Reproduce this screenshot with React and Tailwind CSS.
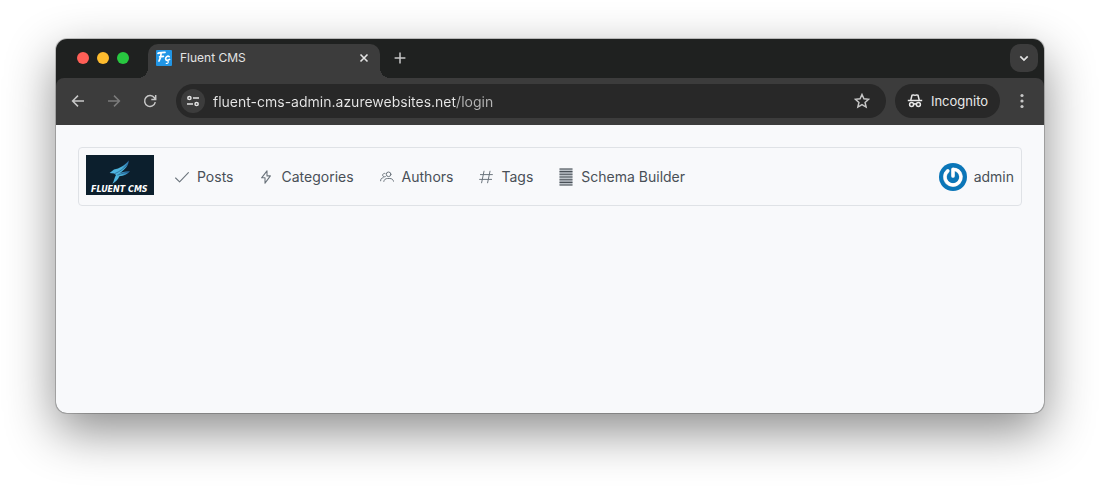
import React from "react";

const menuItems = [
  { label: "Posts", icon: CheckIcon },
  { label: "Categories", icon: BoltIcon },
  { label: "Authors", icon: UsersIcon },
  { label: "Tags", icon: HashIcon },
  { label: "Schema Builder", icon: SchemaIcon },
];

function Icon({ children, className = "size-3.5" }) {
  return (
    <svg
      viewBox="0 0 14 14"
      className={`${className} shrink-0`}
      fill="none"
      stroke="currentColor"
      strokeWidth="1"
      strokeLinecap="round"
      strokeLinejoin="round"
      aria-hidden="true"
    >
      {children}
    </svg>
  );
}

function CheckIcon() {
  return (
    <Icon>
      <path d="M.6 8 4.6 11.8 13.4 2.6" strokeWidth="1.1" />
    </Icon>
  );
}

function BoltIcon() {
  return (
    <Icon>
      <path d="M8 .8 2.6 7.8H6V13.2L11.4 5.9H8Z" strokeWidth="1.1" />
    </Icon>
  );
}

function UsersIcon() {
  return (
    <Icon>
      <circle cx="8.6" cy="4.3" r="2.3" />
      <path d="M3.8 11.4c.3-2 1.9-2.9 3.8-2.9h2.2c2 0 3.4 1 3.7 2.7" />
      <path d="M5 3.4a1.8 1.8 0 1 0 .3 3.3M.6 10.8c0-1.9 1-3 2.6-3.1" />
    </Icon>
  );
}

function HashIcon() {
  return (
    <Icon>
      <path d="M5 1.2 2.6 12.8M11 1.2 8.6 12.8M1.4 4.6h12M.6 9.4h12" />
    </Icon>
  );
}

function SchemaIcon() {
  return (
    <svg viewBox="0 0 14 18" className="h-[18px] w-3.5 shrink-0" aria-hidden="true">
      <path d="M.5.5h13v17H.5z" fill="#bcc2c8" />
      <path
        d="M.5 1h13M.5 3.6h13M.5 6.3h13M.5 9h13M.5 11.7h13M.5 14.4h13M.5 17h13"
        stroke="#495057"
        strokeWidth="1.1"
      />
    </svg>
  );
}

function BrandLogo() {
  return (
    <svg viewBox="0 0 68 40" className="mb-[3px] h-10 w-[68px] shrink-0" role="img" aria-label="Fluent CMS">
      <defs>
        <linearGradient id="wing" x1="0" y1="1" x2="1" y2="0">
          <stop offset="0" stopColor="#4fb4e4" />
          <stop offset=".55" stopColor="#4cb4da" />
          <stop offset="1" stopColor="#2768a4" />
        </linearGradient>
      </defs>
      <rect width="68" height="40" fill="#0c1f2d" />
      <path d="M42.8 5.4C40 9 36 11.6 32 13.6L28 14.6 23.6 18 28 18.6 30.4 20.2C36.4 16.6 42.4 12.2 42.8 5.4Z" fill="url(#wing)" />
      <path d="M30 20C33.4 17.4 38 16.4 44 16.2 41.4 19.2 38 20.8 33.4 21.2 32.2 24.6 29.6 26.4 26.4 28.8 28.2 25.8 28.4 22.6 30 20Z" fill="url(#wing)" />
      <path d="M28.4 18.8C34 16.6 38.4 12.8 41.6 9.2M31.4 20.2C35 18.6 39 17.8 43 16.8" stroke="#194c78" strokeWidth=".6" fill="none" />
      <text x="5" y="37" fill="#fff" className="font-['DejaVu_Sans',sans-serif] text-[8px] font-bold italic">
        FLUENT CMS
      </text>
    </svg>
  );
}

function Favicon() {
  return (
    <svg viewBox="0 0 16 16" className="size-4 shrink-0" aria-hidden="true">
      <rect width="16" height="16" rx="1" fill="#2196e6" />
      <g fill="none" stroke="#fff" strokeLinecap="round" strokeLinejoin="round">
        <path d="M2 3.4C2.8 2.4 5 2.8 9 2.4M5.2 3C5 6 4.6 8.6 3 11M3.6 6.8 7.4 6.4" strokeWidth="1.7" />
        <path d="M13.2 6.6C11.6 5.4 9.6 7 9.6 8.8 9.7 10.8 11.8 10.8 13.6 9.4" strokeWidth="1.6" />
        <path d="M11.8 11C13 12.2 12 13.8 10.2 13.4" strokeWidth="1.1" />
      </g>
    </svg>
  );
}

function Avatar() {
  return (
    <svg viewBox="0 0 28 28" className="size-7 shrink-0" aria-hidden="true">
      <circle cx="14" cy="14" r="14" fill="#0b76b8" />
      <path d="M8.8 8A8 8 0 1 0 19 7.9Q17 6.4 14 6.4V13" fill="none" stroke="#b9cbd6" strokeWidth="3.7" strokeLinecap="round" strokeLinejoin="round" />
      <path d="M8.8 7.8A8 8 0 1 0 19 7.7Q17 6.2 14 6.2V13" fill="none" stroke="#fff" strokeWidth="3.1" strokeLinecap="round" strokeLinejoin="round" />
    </svg>
  );
}

function TabStrip() {
  return (
    <div className="flex h-[39px] items-start pt-[5px] text-[#e3e3e3]">
      <div className="mr-[19px] ml-[21px] flex h-7 items-center gap-2">
        <button type="button" aria-label="Close window" className="size-3 rounded-full bg-[#ff5f57]" />
        <button type="button" aria-label="Minimize window" className="size-3 rounded-full bg-[#febc2e]" />
        <button type="button" aria-label="Zoom window" className="size-3 rounded-full bg-[#28c840]" />
      </div>
      <div className="relative flex h-[34px] w-[232px] items-start rounded-t-[10px] bg-[#3c3c3c] px-2">
        <span className="absolute bottom-0 -left-2.5 size-2.5 bg-[radial-gradient(circle_at_0_0,transparent_10px,#3c3c3c_10px)]" />
        <span className="absolute -right-2.5 bottom-0 size-2.5 bg-[radial-gradient(circle_at_100%_0,transparent_10px,#3c3c3c_10px)]" />
        <div className="flex h-7 flex-1 items-center gap-2">
          <Favicon />
          <span className="flex-1 truncate text-xs">Fluent CMS</span>
          <button type="button" aria-label="Close tab" className="flex size-4 items-center justify-center">
            <Icon>
              <path d="M3.5 3.5 10.5 10.5M10.5 3.5 3.5 10.5" strokeWidth="1.6" strokeLinecap="butt" />
            </Icon>
          </button>
        </div>
      </div>
      <button type="button" aria-label="New tab" className="ml-1.5 flex size-7 items-center justify-center text-[#c7c7c7]">
        <Icon>
          <path d="M7 1.6V12.4M1.6 7H12.4" strokeWidth="1.5" strokeLinecap="butt" />
        </Icon>
      </button>
      <button
        type="button"
        aria-label="Search tabs"
        className="mr-1.5 ml-auto flex size-7 items-center justify-center rounded-[10px] bg-[#3c3c3c]"
      >
        <Icon>
          <path d="M3.3 5.4 7 9.1 10.7 5.4" strokeWidth="1.7" strokeLinecap="butt" strokeLinejoin="miter" />
        </Icon>
      </button>
    </div>
  );
}

function ToolButton({ label, children, className = "" }) {
  return (
    <button type="button" aria-label={label} className={`flex h-[34px] w-9 items-center justify-center ${className}`}>
      {children}
    </button>
  );
}

function Toolbar() {
  return (
    <div className="flex h-[47px] items-start rounded-t-lg bg-[#3c3c3c] px-1 pt-1.5 text-[#c7c7c7]">
      <ToolButton label="Back">
        <Icon>
          <path d="M13 7H1.8M7 1.6 1.6 7 7 12.4" strokeWidth="1.5" strokeLinecap="butt" strokeLinejoin="miter" />
        </Icon>
      </ToolButton>
      <ToolButton label="Forward" className="text-[#7b7b7b]">
        <Icon>
          <path d="M1 7H12.2M7 1.6 12.4 7 7 12.4" strokeWidth="1.5" strokeLinecap="butt" strokeLinejoin="miter" />
        </Icon>
      </ToolButton>
      <ToolButton label="Reload">
        <Icon>
          <path d="M12.3 8.2A5.4 5.4 0 1 1 11.4 3.8L12.6 5.2M12.7 1V5.4H8.3" strokeWidth="1.5" strokeLinecap="butt" strokeLinejoin="miter" />
        </Icon>
      </ToolButton>
      <div className="mr-[9px] ml-2 flex h-[34px] flex-1 items-center rounded-full bg-[#282828] pr-1.5 pl-[5px]">
        <button
          type="button"
          aria-label="View site information"
          className="flex size-6 shrink-0 items-center justify-center rounded-full bg-[#3c3c3c] text-[#e3e3e3]"
        >
          <Icon>
            <circle cx="3.4" cy="4" r="1.6" strokeWidth="1.5" />
            <circle cx="10.6" cy="10" r="1.6" strokeWidth="1.5" />
            <path d="M7 4H13M1 10H7" strokeWidth="1.5" strokeLinecap="butt" />
          </Icon>
        </button>
        <input
          type="text"
          aria-label="Address"
          defaultValue="fluent-cms-admin.azurewebsites.net/login"
          className="ml-2 h-6 min-w-0 flex-1 bg-linear-to-r from-[#e8e8e8] from-[242px] to-[#b5b5b5] to-[243px] bg-clip-text text-sm text-transparent outline-none"
        />
        <button type="button" aria-label="Bookmark this page" className="flex h-6 w-9 items-center justify-center">
          <Icon className="size-4">
            <path
              d="M7 1.3 8.7 5.1 12.8 5.5 9.7 8.3 10.6 12.3 7 10.2 3.4 12.3 4.3 8.3 1.2 5.5 5.3 5.1Z"
              strokeWidth="1.3"
              strokeLinejoin="miter"
            />
          </Icon>
        </button>
      </div>
      <button
        type="button"
        className="flex h-[34px] w-[105px] items-center justify-center gap-2 rounded-full bg-[#282828] text-[13px] leading-5 text-[#e8e8e8]"
      >
        <svg viewBox="0 0 16 16" className="size-4 shrink-0" fill="none" stroke="currentColor" strokeWidth="1.5" aria-hidden="true">
          <path d="M.8 7.6H15.2M3.7 7.4 5 2.3 6.4 1.9 8 2.4 9.6 1.9 11 2.3 12.3 7.4" strokeLinejoin="round" />
          <circle cx="4.6" cy="11.6" r="2" />
          <circle cx="11.4" cy="11.6" r="2" />
          <path d="M6.5 11.3C7.4 10.6 8.6 10.6 9.5 11.3" />
        </svg>
        Incognito
      </button>
      <ToolButton label="Browser menu" className="ml-1">
        <svg viewBox="0 0 4 16" className="h-4 w-1" fill="currentColor" aria-hidden="true">
          <circle cx="2" cy="2.5" r="1.6" />
          <circle cx="2" cy="8" r="1.6" />
          <circle cx="2" cy="13.5" r="1.6" />
        </svg>
      </ToolButton>
    </div>
  );
}

function Menubar() {
  return (
    <header className="flex items-center rounded-sm border border-[#dfe2e6] p-[7px] text-sm text-[#495057]">
      <BrandLogo />
      <nav className="ml-[21px] flex items-center gap-[26px]">
        {menuItems.map(({ label, icon: ItemIcon }) => (
          <a key={label} href="#" className="flex items-center gap-2">
            <span className="text-[#6c757d]">
              <ItemIcon />
            </span>
            {label}
          </a>
        ))}
      </nav>
      <a href="#" className="ml-auto flex items-center gap-[7px]">
        <Avatar />
        admin
      </a>
    </header>
  );
}

export default function App() {
  return (
    <div className="bg-white px-14 pt-[39px] pb-[74px] font-['Inter','Liberation_Sans',sans-serif]">
      <div className="overflow-hidden rounded-[11px] bg-[#1f2120] shadow-[0_0_0_1px_rgba(0,0,0,0.2),0_18px_50px_rgba(0,0,0,0.46)]">
        <TabStrip />
        <Toolbar />
        <main className="min-h-72 bg-[#f8f9fb] p-[22px]">
          <Menubar />
        </main>
      </div>
    </div>
  );
}
